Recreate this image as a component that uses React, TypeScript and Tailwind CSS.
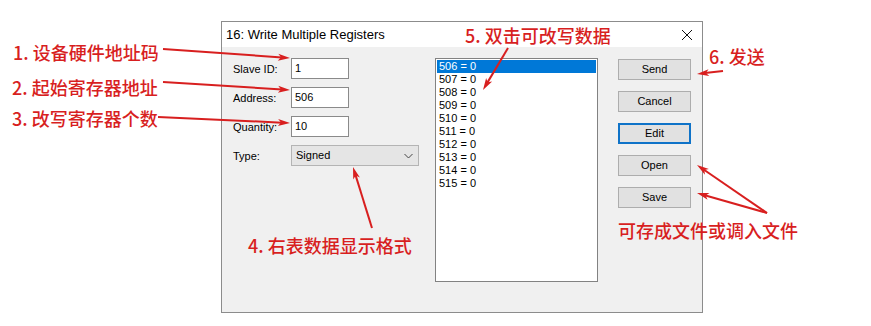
import React from 'react';

const registers = [506, 507, 508, 509, 510, 511, 512, 513, 514, 515];

const notes = [
  { text: '1. 设备硬件地址码', cls: 'left-[13px] top-[40px]' },
  { text: '2. 起始寄存器地址', cls: 'left-[12px] top-[75px]' },
  { text: '3. 改写寄存器个数', cls: 'left-[12px] top-[106px]' },
  { text: '4. 右表数据显示格式', cls: 'left-[248px] top-[233px]' },
  { text: '5. 双击可改写数据', cls: 'left-[465px] top-[23px]' },
  { text: '6. 发送', cls: 'left-[709px] top-[44px]' },
  { text: '可存成文件或调入文件', cls: 'left-[618px] top-[218px]' },
];

const arrows: [number, number, number, number][] = [
  [163, 49, 290, 58],
  [163, 82, 290, 90],
  [158, 117, 290, 123],
  [372, 228, 353, 167],
  [508, 48, 483, 90],
  [723, 71, 697, 74],
  [767, 213, 697, 165],
  [767, 213, 697, 193],
];

function Arrow({ x1, y1, x2, y2 }: { x1: number; y1: number; x2: number; y2: number }) {
  const dx = x2 - x1;
  const dy = y2 - y1;
  const len = Math.hypot(dx, dy);
  const ux = dx / len;
  const uy = dy / len;
  const headLen = 12;
  const half = 3.5;
  const bx = x2 - ux * headLen;
  const by = y2 - uy * headLen;
  const pts = `${x2},${y2} ${bx - uy * half},${by + ux * half} ${bx + ux * 3},${by + uy * 3} ${bx + uy * half},${by - ux * half}`;
  return (
    <g>
      <line x1={x1} y1={y1} x2={bx + ux * 4} y2={by + uy * 4} stroke="#d81f1f" strokeWidth={2} />
      <polygon points={pts} fill="#d81f1f" />
    </g>
  );
}

function Field({ label, value }: { label: string; value: string }) {
  return (
    <div className="flex items-center h-[21px]">
      <span className="w-[58px] pt-[2px]">{label}</span>
      <div className="w-[58px] h-[21px] bg-white border border-[#8a8a8a] pl-[3px] flex items-center">
        {value}
      </div>
    </div>
  );
}

function Btn({ label, focused = false }: { label: string; focused?: boolean }) {
  return (
    <div
      className={
        focused
          ? 'h-[21px] w-[73px] bg-[#e1e1e1] border-2 border-[#0f73c8] flex items-center justify-center'
          : 'h-[21px] w-[73px] bg-[#e1e1e1] border border-[#adadad] flex items-center justify-center'
      }
    >
      {label}
    </div>
  );
}

export default function App() {
  return (
    <div className="relative w-[871px] h-[326px] bg-white overflow-hidden">
      <div className="pt-[21px] pl-[221px]">
        <div className="w-[482px] h-[292px] border border-[#8c8c8c] bg-[#f0f0f0] text-[11px] text-black font-['Liberation_Sans',sans-serif] leading-none">
          {/* title bar */}
          <div className="h-[25px] bg-white flex items-center justify-between pl-[4px] pr-[9px]">
            <span className="text-[13px]">16: Write Multiple Registers</span>
            <svg width="12" height="12" viewBox="0 0 12 12">
              <path d="M1 1 L11 11 M11 1 L1 11" stroke="#111" strokeWidth="1" fill="none" />
            </svg>
          </div>

          {/* body */}
          <div className="flex pt-[11px] pl-[11px]">
            <div className="flex flex-col gap-[8px] w-[186px]">
              <Field label="Slave ID:" value="1" />
              <Field label="Address:" value="506" />
              <Field label="Quantity:" value="10" />
              <div className="flex items-center h-[21px]">
                <span className="w-[58px] pt-[2px]">Type:</span>
                <div className="w-[128px] h-[21px] bg-[#e5e5e5] border border-[#b4b4b4] pl-[4px] pr-[5px] flex items-center justify-between">
                  <span>Signed</span>
                  <svg width="9" height="6" viewBox="0 0 9 6">
                    <path d="M0.5 1 L4.5 5 L8.5 1" stroke="#444" strokeWidth="1" fill="none" />
                  </svg>
                </div>
              </div>
            </div>

            <div className="ml-[16px] w-[163px] h-[224px] bg-white border border-[#828282] p-[1px] flex flex-col">
              {registers.map((r, i) => (
                <div
                  key={r}
                  className={
                    i === 0
                      ? 'h-[13px] pl-[2px] flex items-center bg-[#0078d7] text-white'
                      : 'h-[13px] pl-[2px] flex items-center'
                  }
                >
                  {r} = 0
                </div>
              ))}
            </div>

            <div className="ml-[20px] mt-[1px] flex flex-col gap-[11px]">
              <Btn label="Send" />
              <Btn label="Cancel" />
              <Btn label="Edit" focused />
              <Btn label="Open" />
              <Btn label="Save" />
            </div>
          </div>
        </div>
      </div>

      {/* annotations */}
      {notes.map((n) => (
        <div
          key={n.text}
          className={`absolute ${n.cls} text-[18px] leading-[24px] whitespace-nowrap text-[#d81f1f] font-medium font-['Noto_Sans_CJK_SC',sans-serif]`}
        >
          {n.text}
        </div>
      ))}

      <svg className="absolute inset-0 pointer-events-none" width="871" height="326">
        {arrows.map(([x1, y1, x2, y2], i) => (
          <Arrow key={i} x1={x1} y1={y1} x2={x2} y2={y2} />
        ))}
      </svg>
    </div>
  );
}
